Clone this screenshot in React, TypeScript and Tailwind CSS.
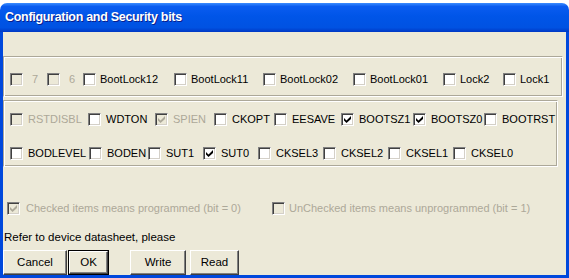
import type { ReactNode } from 'react';

type Bit = { label: string; w?: number; checked?: boolean; disabled?: boolean; gap?: number };

const row1: Bit[] = [
  { label: '7', w: 37, disabled: true, gap: 9 },
  { label: '6', w: 36, disabled: true, gap: 9 },
  { label: 'BootLock12', w: 91 },
  { label: 'BootLock11', w: 89 },
  { label: 'BootLock02', w: 90 },
  { label: 'BootLock01', w: 90 },
  { label: 'Lock2', w: 60 },
  { label: 'Lock1' },
];

const row2: Bit[] = [
  { label: 'RSTDISBL', w: 78, disabled: true },
  { label: 'WDTON', w: 67 },
  { label: 'SPIEN', w: 59, disabled: true, checked: true },
  { label: 'CKOPT', w: 60 },
  { label: 'EESAVE', w: 67 },
  { label: 'BOOTSZ1', w: 72, checked: true },
  { label: 'BOOTSZ0', w: 71, checked: true },
  { label: 'BOOTRST' },
];

const row3: Bit[] = [
  { label: 'BODLEVEL', w: 79 },
  { label: 'BODEN', w: 59 },
  { label: 'SUT1', w: 55 },
  { label: 'SUT0', w: 55, checked: true },
  { label: 'CKSEL3', w: 65 },
  { label: 'CKSEL2', w: 65 },
  { label: 'CKSEL1', w: 65 },
  { label: 'CKSEL0' },
];

// classic sunken checkbox
const Box = ({ checked, disabled }: { checked?: boolean; disabled?: boolean }) => (
  <span
    className={`flex h-[13px] w-[13px] shrink-0 items-center justify-center border border-t-[#808080] border-l-[#808080] border-b-white border-r-white shadow-[inset_1px_1px_0_#404040,inset_-1px_-1px_0_#d4d0c8] ${
      disabled ? 'bg-[#ece9d8]' : 'bg-white'
    }`}
  >
    {checked && (
      <svg width="7" height="7" viewBox="0 0 7 7">
        <path d="M0 2 L2.5 4.5 L7 0 V3 L2.5 7 L0 4.5 Z" fill={disabled ? '#aca899' : '#000'} />
      </svg>
    )}
  </span>
);

const Check = ({ label, w, checked, disabled, gap = 5 }: Bit) => (
  <div className="flex h-[13px] shrink-0 items-center" style={w ? { width: w } : undefined}>
    <Box checked={checked} disabled={disabled} />
    <span
      className={`whitespace-nowrap leading-none ${disabled ? 'text-[#aca899]' : 'text-black'}`}
      style={{ marginLeft: gap }}
    >
      {label}
    </span>
  </div>
);

const Group = ({ className, children }: { className: string; children: ReactNode }) => (
  <div className={`border border-t-[#aca899] border-l-[#aca899] border-b-white border-r-white shadow-[inset_1px_1px_0_white,inset_-1px_-1px_0_#aca899] ${className}`}>
    {children}
  </div>
);

const Btn = ({ children, w, isDefault }: { children: ReactNode; w: string; isDefault?: boolean }) => (
  <button className={`h-[25px] ${w} ${isDefault ? 'border border-black' : ''}`}>
    <span className="flex h-full w-full items-center justify-center border border-t-white border-l-white border-b-[#404040] border-r-[#404040] bg-[#ece9d8] text-[11.5px] text-black shadow-[inset_-1px_-1px_0_#808080]">
      {children}
    </span>
  </button>
);

export default function App() {
  return (
    <div className="h-[278px] w-[569px] overflow-hidden bg-white pt-[3px] font-['Liberation_Sans',Arial,sans-serif] text-[11px]">
      <div className="flex h-[275px] flex-col">
        {/* title bar */}
        <div className="flex h-[29px] items-center rounded-t-[7px] bg-[linear-gradient(180deg,#3b8cff_0%,#0a5cf0_12%,#0055e8_45%,#0052e2_85%,#0038c4_100%)] pl-[5px]">
          <span className="text-[12.5px] font-bold tracking-[-0.3px] text-white [text-shadow:1px_1px_0_#0a1e8c]">
            Configuration and Security bits
          </span>
        </div>

        {/* client area */}
        <div className="flex flex-1 border-x-[3px] border-b-[3px] border-[#0048dc] bg-[#ece9d8]">
          <div className="flex flex-1 flex-col">
            <Group className="mt-[24px] h-[41px] w-[560px] pl-[6px] pt-[16px]">
              <div className="flex">
                {row1.map((b) => (
                  <Check key={b.label} {...b} gap={b.gap ?? 4} />
                ))}
              </div>
            </Group>

            <Group className="mt-[3px] h-[67px] w-[555px] pl-[6px] pt-[12px]">
              <div className="flex flex-col gap-[21px]">
                <div className="flex">
                  {row2.map((b) => (
                    <Check key={b.label} {...b} />
                  ))}
                </div>
                <div className="flex">
                  {row3.map((b) => (
                    <Check key={b.label} {...b} />
                  ))}
                </div>
              </div>
            </Group>

            <div className="mt-[35px] flex pl-[4px]">
              <Check label="Checked items means programmed (bit = 0)" w={265} checked disabled gap={6} />
              <Check label="UnChecked items means unprogrammed (bit = 1)" disabled gap={4} />
            </div>

            <div className="mt-[16px] pl-[1px] text-[11.5px] leading-[13px] text-black">Refer to device datasheet, please</div>

            <div className="mt-[6px] flex items-start">
              <Btn w="w-[64px]">Cancel</Btn>
              <div className="ml-[1px]">
                <Btn w="w-[41px]" isDefault>
                  OK
                </Btn>
              </div>
              <div className="ml-[21px]">
                <Btn w="w-[56px]">Write</Btn>
              </div>
              <div className="ml-[4px]">
                <Btn w="w-[49px]">Read</Btn>
              </div>
            </div>
          </div>
        </div>
      </div>
    </div>
  );
}
